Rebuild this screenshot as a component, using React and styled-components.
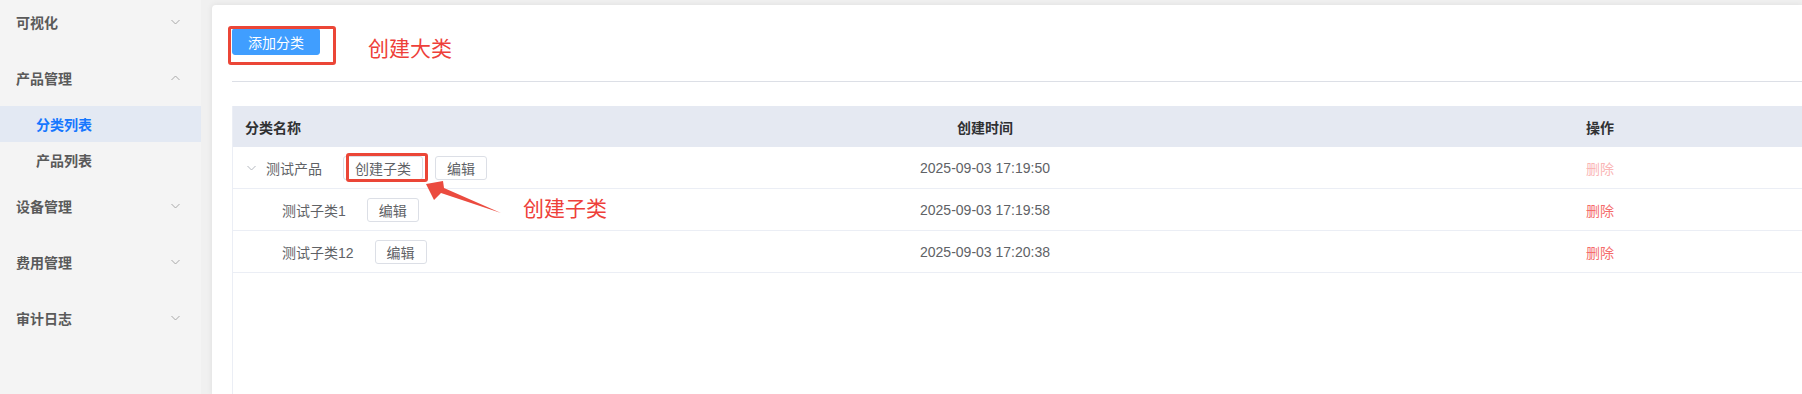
import React from "react"
import styled, { createGlobalStyle } from "styled-components"

const GlobalStyle = createGlobalStyle`
  html, body {
    margin: 0;
    padding: 0;
  }
  body {
    font-family: "Liberation Sans", "Noto Sans CJK SC", sans-serif;
    background: #f0f0f0;
    overflow: hidden;
  }
`

const menu = [
  { title: "可视化" },
  { title: "产品管理", open: true, children: [{ title: "分类列表", active: true }, { title: "产品列表" }] },
  { title: "设备管理" },
  { title: "费用管理" },
  { title: "审计日志" },
]

const rows = [
  { name: "测试产品", parent: true, time: "2025-09-03 17:19:50", canDelete: false },
  { name: "测试子类1", time: "2025-09-03 17:19:58", canDelete: true },
  { name: "测试子类12", time: "2025-09-03 17:20:38", canDelete: true },
]

const Chevron = ({ up, color = "#a8a8a8" }) => (
  <svg width="9" height="6" viewBox="0 0 9 6">
    <polyline
      points={up ? "0.5,5 4.5,1 8.5,5" : "0.5,1 4.5,5 8.5,1"}
      fill="none"
      stroke={color}
      strokeWidth="1"
    />
  </svg>
)

const Page = styled.div`
  position: relative;
  display: flex;
  height: 394px;
  overflow: hidden;
`

const Sidebar = styled.aside`
  width: 201px;
  flex-shrink: 0;
  background: #f4f4f4;
  font-family: "Noto Sans CJK SC", sans-serif;
`

const MenuList = styled.div`
  margin-top: -6px;
`

const MenuTitle = styled.div`
  height: 56px;
  display: flex;
  align-items: center;
  justify-content: space-between;
  padding: 0 21px 0 16px;
  font-size: 14px;
  font-weight: 700;
  color: #5a5a5a;
`

const SubItem = styled.div`
  height: 36px;
  display: flex;
  align-items: center;
  padding-left: 36px;
  font-size: 14px;
  font-weight: 700;
  color: ${p => (p.$active ? "#1677ff" : "#5a5a5a")};
  background: ${p => (p.$active ? "#e3e9f3" : "transparent")};
`

const Main = styled.main`
  flex: 1;
  min-width: 0;
  padding: 5px 0 0 11px;
`

const Card = styled.section`
  height: 100%;
  box-sizing: border-box;
  background: #fff;
  border-radius: 4px 0 0 0;
  box-shadow: 0 0 6px rgba(0, 0, 0, 0.08);
  padding: 23px 0 0 20px;
  display: flex;
  flex-direction: column;
  overflow: hidden;
`

const Toolbar = styled.div`
  display: flex;
  align-items: center;
  padding-bottom: 26px;
  border-bottom: 1px solid #dcdfe6;
`

const PrimaryButton = styled.button`
  height: 27px;
  padding: 0 15px;
  border: 1px solid #409eff;
  border-radius: 3px;
  background: #409eff;
  color: #fff;
  font-family: "Noto Sans CJK SC", sans-serif;
  font-size: 14px;
  line-height: 1;
`

const Table = styled.div`
  flex: 1;
  margin-top: 24px;
  border-left: 1px solid #ebeef5;
  width: 1735px;
`

const HeaderRow = styled.div`
  display: grid;
  grid-template-columns: 505px 494px 736px;
  height: 41px;
  align-items: center;
  background: #e5e9f2;
  font-family: "Noto Sans CJK SC", sans-serif;
  font-size: 14px;
  font-weight: 700;
  color: #303133;
`

const HeadCell = styled.div`
  text-align: ${p => p.$align || "left"};
  padding-left: ${p => (p.$align === "center" ? 0 : 12)}px;
`

const Row = styled.div`
  display: grid;
  grid-template-columns: 505px 494px 736px;
  height: 41px;
  align-items: center;
  border-bottom: 1px solid #ebeef5;
  font-size: 14px;
  color: #606266;
`

const NameCell = styled.div`
  display: flex;
  align-items: center;
  padding-left: ${p => (p.$parent ? 14 : 49)}px;
  font-family: "Liberation Sans", "Noto Sans CJK SC", sans-serif;
`

const Toggle = styled.span`
  display: flex;
  margin-right: 10px;
`

const PlainButton = styled.button`
  height: 24px;
  padding: 0 11px;
  margin-left: ${p => (p.$first ? 21 : 12)}px;
  border: 1px solid #dcdfe6;
  border-radius: 3px;
  background: #fff;
  color: #606266;
  font-family: "Noto Sans CJK SC", sans-serif;
  font-size: 14px;
  line-height: 1;
`

const TimeCell = styled.div`
  text-align: center;
`

const ActionCell = styled.div`
  text-align: center;
  font-family: "Noto Sans CJK SC", sans-serif;
  color: ${p => (p.$disabled ? "#fab6b6" : "#f56c6c")};
`

// annotation layer drawn over the screenshot
const MarkBox = styled.div`
  position: absolute;
  left: ${p => p.$x}px;
  top: ${p => p.$y}px;
  width: ${p => p.$w}px;
  height: ${p => p.$h}px;
  box-sizing: border-box;
  border: 3px solid #eb4637;
  border-radius: 3px;
`

const MarkLabel = styled.div`
  position: absolute;
  left: ${p => p.$x}px;
  top: ${p => p.$y}px;
  font-family: "Noto Sans CJK SC", sans-serif;
  font-size: 21px;
  line-height: 21px;
  color: #ee3f3a;
  white-space: nowrap;
`

const ArrowSvg = styled.svg`
  position: absolute;
  left: 0;
  top: 0;
  pointer-events: none;
`

export default function App() {
  return (
    <>
      <GlobalStyle />
      <Page>
        <Sidebar>
          <MenuList>
            {menu.map(m => (
              <div key={m.title}>
                <MenuTitle>
                  {m.title}
                  <Chevron up={m.open} />
                </MenuTitle>
                {m.children &&
                  m.children.map(c => (
                    <SubItem key={c.title} $active={c.active}>
                      {c.title}
                    </SubItem>
                  ))}
              </div>
            ))}
          </MenuList>
        </Sidebar>
        <Main>
          <Card>
            <Toolbar>
              <PrimaryButton>添加分类</PrimaryButton>
            </Toolbar>
            <Table>
              <HeaderRow>
                <HeadCell>分类名称</HeadCell>
                <HeadCell $align="center">创建时间</HeadCell>
                <HeadCell $align="center">操作</HeadCell>
              </HeaderRow>
              {rows.map(r => (
                <Row key={r.name}>
                  <NameCell $parent={r.parent}>
                    {r.parent && (
                      <Toggle>
                        <Chevron color="#b4b8bf" />
                      </Toggle>
                    )}
                    {r.name}
                    {r.parent && <PlainButton $first>创建子类</PlainButton>}
                    <PlainButton $first={!r.parent}>编辑</PlainButton>
                  </NameCell>
                  <TimeCell>{r.time}</TimeCell>
                  <ActionCell $disabled={!r.canDelete}>删除</ActionCell>
                </Row>
              ))}
            </Table>
          </Card>
        </Main>

        <MarkBox $x={228} $y={26} $w={108} $h={39} />
        <MarkLabel $x={368} $y={37}>创建大类</MarkLabel>
        <MarkBox $x={346} $y={153} $w={82} $h={29} />
        <ArrowSvg width="520" height="230" viewBox="0 0 520 230">
          <polygon
            points="426,184 443,181 444,188 501,213 441,193 434,200"
            fill="#eb4b3f"
          />
        </ArrowSvg>
        <MarkLabel $x={523} $y={197}>创建子类</MarkLabel>
      </Page>
    </>
  )
}
